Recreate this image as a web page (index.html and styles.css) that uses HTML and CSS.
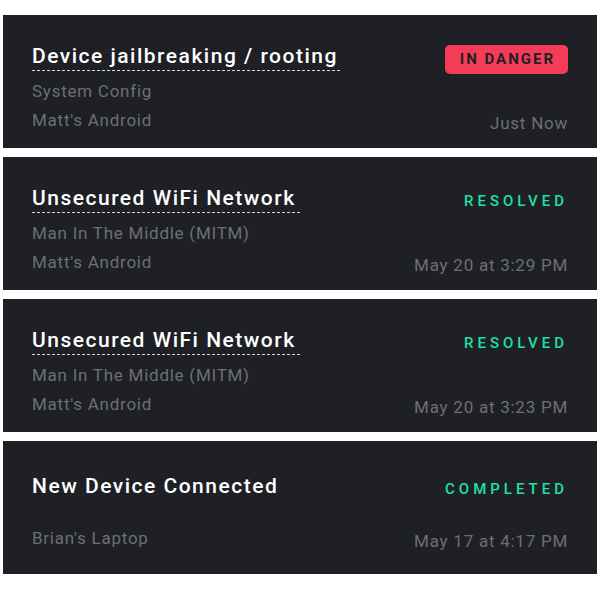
FILE: index.html
```html
<!DOCTYPE html>
<html lang="en">
<head>
    <meta charset="UTF-8">
    <meta name="viewport" content="width=device-width, initial-scale=1.0">
    <title>Alerts</title>
    <link rel="stylesheet" href="styles.css">
</head>
<body>
    <div class="list">
        <!-- Aktiver Alarm -->
        <div class="card">
            <div class="row">
                <div class="info">
                    <span class="title dashed">Device jailbreaking / rooting</span>
                    <span class="sub">System Config</span>
                    <span class="device">Matt's Android</span>
                </div>
                <div class="meta">
                    <span class="status danger">IN DANGER</span>
                    <span class="time">Just Now</span>
                </div>
            </div>
        </div>

        <div class="card">
            <div class="row">
                <div class="info">
                    <span class="title dashed">Unsecured WiFi Network</span>
                    <span class="sub">Man In The Middle (MITM)</span>
                    <span class="device">Matt's Android</span>
                </div>
                <div class="meta">
                    <span class="status ok">RESOLVED</span>
                    <span class="time">May 20 at 3:29 PM</span>
                </div>
            </div>
        </div>

        <div class="card">
            <div class="row">
                <div class="info">
                    <span class="title dashed">Unsecured WiFi Network</span>
                    <span class="sub">Man In The Middle (MITM)</span>
                    <span class="device">Matt's Android</span>
                </div>
                <div class="meta">
                    <span class="status ok">RESOLVED</span>
                    <span class="time">May 20 at 3:23 PM</span>
                </div>
            </div>
        </div>

        <!-- ohne Untertitel -->
        <div class="card short">
            <div class="row">
                <div class="info">
                    <span class="title">New Device Connected</span>
                    <span class="device spaced">Brian's Laptop</span>
                </div>
                <div class="meta">
                    <span class="status ok">COMPLETED</span>
                    <span class="time">May 17 at 4:17 PM</span>
                </div>
            </div>
        </div>
    </div>
</body>
</html>
```

FILE: styles.css
```css
body {
    font-family: Roboto, 'Liberation Sans', sans-serif;
    background-color: #fff;
    margin: 0;
    padding: 15px 3px;
}
.list {
    display: flex;
    flex-direction: column;
    gap: 9px;
}
.card {
    background-color: #1e2025;
    height: 133px;
    box-sizing: border-box;
    padding: 14px 29px 0 29px;
    display: flex;
    align-items: center;
}
.card.short {
    padding-top: 10px;
}
.row {
    flex: 1;
    display: flex;
    justify-content: space-between;
}
.info {
    display: flex;
    flex-direction: column;
    align-items: flex-start;
    padding-bottom: 3px;
}
.title {
    color: #fff;
    font-size: 21px;
    line-height: 24px;
    font-weight: 500;
    letter-spacing: 1.5px;
}
.dashed {
    padding-bottom: 3px;
    padding-right: 4px;
    background-image: linear-gradient(to right, #d8d9db 60%, transparent 0);
    background-size: 5px 1px;
    background-repeat: repeat-x;
    background-position: left bottom;
}
.sub,
.device,
.time {
    color: #6c6f76;
    font-size: 17px;
    line-height: 20px;
    letter-spacing: 0.75px;
}
.sub {
    margin-top: 10px;
}
.device {
    margin-top: 9px;
}
.device.spaced {
    margin-top: 30px;
}
.meta {
    display: flex;
    flex-direction: column;
    align-items: flex-end;
}
.status {
    margin-top: 1px;
    height: 29px;
    line-height: 29px;
    font-size: 15px;
    font-weight: 500;
    letter-spacing: 4px;
}
.danger {
    background-color: #f43c59;
    color: #1e2025;
    font-weight: 700;
    letter-spacing: 2px;
    border-radius: 5px;
    padding: 0 13px 0 15px;
}
.ok {
    color: #1fe0a0;
}
.time {
    margin-top: auto;
}
```
